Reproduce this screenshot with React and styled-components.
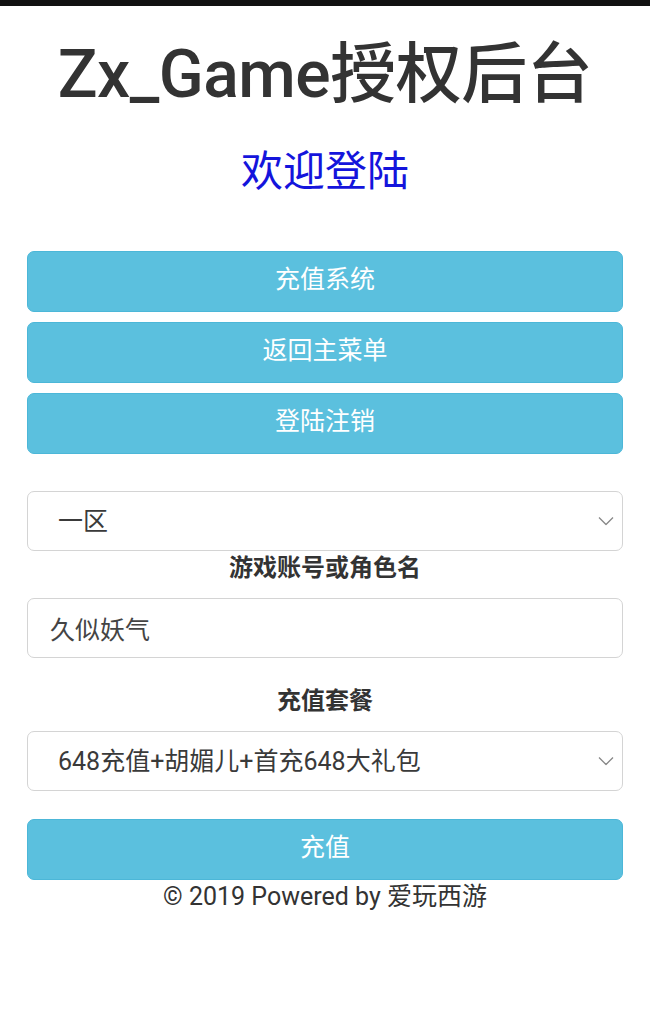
import React from "react";
import styled, { createGlobalStyle } from "styled-components";

const Global = createGlobalStyle`
  html, body { margin: 0; padding: 0; background: #fff; }
  body { font-family: Roboto, "Noto Sans CJK SC", sans-serif; color: #333; }
  * { box-sizing: border-box; }
`;

const TopBar = styled.div`
  height: 6px;
  background: #111;
`;

const Page = styled.main`
  display: flex;
  flex-direction: column;
  padding: 0 27px;
`;

const Title = styled.h1`
  margin: 32px 0 0;
  font-size: 66px;
  line-height: 73px;
  font-weight: 500;
  text-align: center;
  color: #333;
  white-space: nowrap;
  letter-spacing: -0.5px;
`;

const Subtitle = styled.h2`
  margin: 36px 0 0;
  font-size: 42px;
  line-height: 50px;
  font-weight: 400;
  text-align: center;
  color: #1414dc;
`;

const ButtonGroup = styled.div`
  display: flex;
  flex-direction: column;
  gap: 10px;
  margin-top: ${(p) => p.$top || 0}px;
`;

const Button = styled.button`
  height: 61px;
  width: 100%;
  border: 1px solid #4cb7d8;
  border-radius: 7px;
  background: #5bc0de;
  color: #fff;
  font-family: Roboto, "Noto Sans CJK SC", sans-serif;
  font-size: 25px;
  line-height: 1;
  padding: 0 0 5px;
  cursor: pointer;
  margin-top: ${(p) => p.$top || 0}px;
`;

const Field = styled.div`
  position: relative;
  margin-top: ${(p) => p.$top || 0}px;
`;

const Select = styled.select`
  appearance: none;
  -webkit-appearance: none;
  width: 100%;
  height: 60px;
  border: 1.5px solid #d4d4d4;
  border-radius: 7px;
  background: #fff;
  color: #3a3a3a;
  padding: 0 50px 0 30px;
  font-family: Roboto, "Noto Sans CJK SC", sans-serif;
  font-size: 25px;
`;

const Chevron = styled.svg`
  position: absolute;
  right: 9px;
  top: 50%;
  transform: translateY(-50%);
  pointer-events: none;
`;

const Input = styled.input`
  width: 100%;
  height: 60px;
  border: 1.5px solid #d4d4d4;
  border-radius: 7px;
  background: #fff;
  color: #444;
  padding: 0 22px;
  font-family: Roboto, "Noto Sans CJK SC", sans-serif;
  font-size: 25px;
  margin-top: ${(p) => p.$top || 0}px;
`;

const Label = styled.label`
  display: block;
  text-align: center;
  font-weight: 700;
  font-size: 24px;
  line-height: 34px;
  color: #333;
  margin-top: ${(p) => p.$top || 0}px;
`;

const Footer = styled.footer`
  text-align: center;
  font-size: 25px;
  line-height: 34px;
  color: #333;
`;

const SelectField = ({ top, children }) => (
  <Field $top={top}>
    <Select>{children}</Select>
    <Chevron width="16" height="9" viewBox="0 0 16 9">
      <path d="M1 1 L8 8 L15 1" fill="none" stroke="#888" strokeWidth="1.3" />
    </Chevron>
  </Field>
);

export default function App() {
  return (
    <>
      <Global />
      <TopBar />
      <Page>
        <Title>Zx_Game授权后台</Title>
        <Subtitle>欢迎登陆</Subtitle>
        <ButtonGroup $top={54}>
          <Button>充值系统</Button>
          <Button>返回主菜单</Button>
          <Button>登陆注销</Button>
        </ButtonGroup>
        <SelectField top={37}>
          <option>一区</option>
          <option>二区</option>
        </SelectField>
        <Label>游戏账号或角色名</Label>
        <Input $top={13} defaultValue="久似妖气" />
        <Label $top={26}>充值套餐</Label>
        <SelectField top={13}>
          <option>648充值+胡媚儿+首充648大礼包</option>
        </SelectField>
        <Button $top={28}>充值</Button>
        <Footer>© 2019 Powered by 爱玩西游</Footer>
      </Page>
    </>
  );
}
